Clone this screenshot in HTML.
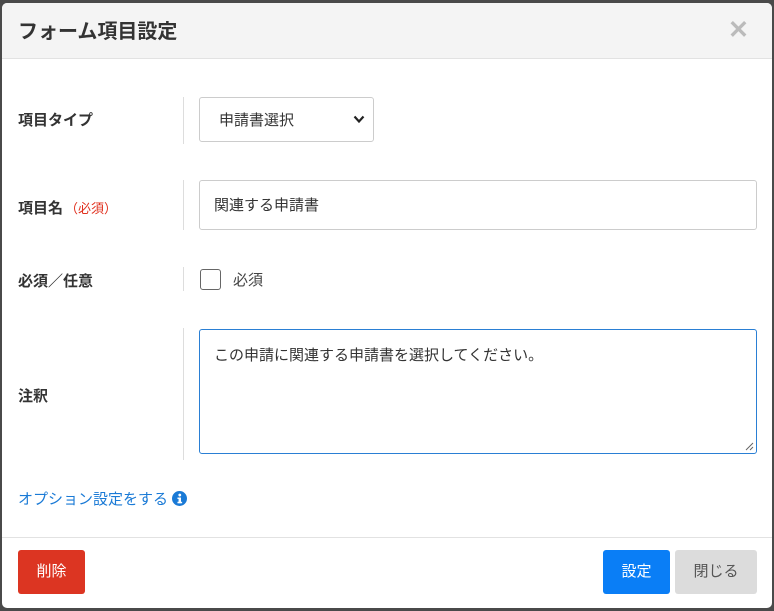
<!DOCTYPE html>
<html><head><meta charset="utf-8"><style>
*{box-sizing:border-box;margin:0;padding:0}
body{width:774px;height:611px;background:#4a4a4a;font-family:"Liberation Sans","Noto Sans CJK JP",sans-serif;position:relative;overflow:hidden}
.m{position:absolute;left:2px;top:3px;width:770px;height:605px;background:#fff;border-radius:5px;overflow:hidden}
.hd{position:absolute;left:0;top:0;width:100%;height:56px;background:#f4f4f4;border-bottom:1px solid #e2e2e2}
.hd h1{position:absolute;left:16px;top:16px;font-size:20px;font-weight:bold;color:#333;line-height:26px}
.x{position:absolute;left:726px;top:12px;font-size:25px;color:#bbb;font-weight:900}
.lb{position:absolute;left:16px;font-size:15px;font-weight:bold;color:#333}
.vl{position:absolute;left:181px;width:1px;background:#ddd}
.in{position:absolute;left:197px;border:1px solid #ccc;border-radius:3px;font-size:15px;color:#333;background:#fff}
.ft{position:absolute;left:0;top:534px;width:100%;border-top:1px solid #e2e2e2}
.b{position:absolute;top:547px;height:44px;border-radius:3px;font-size:15px;line-height:44px;text-align:center;color:#fff}
</style></head><body>
<div class="m">
<div class="hd"><h1>フォーム項目設定</h1><div class="x">✕</div></div>
<div class="lb" style="top:106px">項目タイプ</div>
<div class="vl" style="top:94px;height:47px"></div>
<div class="in" style="top:94px;width:175px;height:45px;padding:11px 0 0 19px">申請書選択
<svg style="position:absolute;right:8px;top:17px" width="12" height="9" viewBox="0 0 12 9"><path d="M1.5 1.5L6 6.5L10.5 1.5" fill="none" stroke="#222" stroke-width="2.2"/></svg></div>
<div class="lb" style="top:194px">項目名<span style="color:#e0301e;font-size:13px;font-weight:normal;margin-left:2px">（必須）</span></div>
<div class="vl" style="top:177px;height:50px"></div>
<div class="in" style="top:177px;width:558px;height:50px;padding:13px 0 0 14px">関連する申請書</div>
<div class="lb" style="top:267px">必須／任意</div>
<div class="vl" style="top:264px;height:24px"></div>
<div style="position:absolute;left:198px;top:266px;width:21px;height:21px;border:1.5px solid #666;border-radius:3px"></div>
<div style="position:absolute;left:231px;top:266px;font-size:15px;color:#444">必須</div>
<div class="lb" style="top:382px">注釈</div>
<div class="vl" style="top:325px;height:132px"></div>
<div class="in" style="top:326px;width:558px;height:125px;padding:14px 0 0 14px;border-color:#2a7fd4">この申請に関連する申請書を選択してください。
<svg style="position:absolute;right:2px;bottom:2px" width="9" height="9"><path d="M1 8L8 1M5 8L8 5" stroke="#666"/></svg></div>
<div style="position:absolute;left:16px;top:485px;font-size:15px;color:#1a7ad6">オプション設定をする<svg width="15" height="15" viewBox="0 0 16 16" style="vertical-align:-2px;margin-left:4px"><circle cx="8" cy="8" r="8" fill="#1a7ad6"/><rect x="7" y="7" width="2.6" height="6" fill="#fff"/><rect x="5.8" y="11.5" width="5" height="1.6" fill="#fff"/><rect x="5.8" y="7" width="3.5" height="1.5" fill="#fff"/><circle cx="8.3" cy="4.3" r="1.5" fill="#fff"/></svg></div>
<div class="ft"></div>
<div class="b" style="left:16px;width:67px;background:#dc3522">削除</div>
<div class="b" style="left:601px;width:67px;background:#0a7ef6">設定</div>
<div class="b" style="left:673px;width:82px;background:#dcdcdc;color:#555">閉じる</div>
</div>
</body></html>
